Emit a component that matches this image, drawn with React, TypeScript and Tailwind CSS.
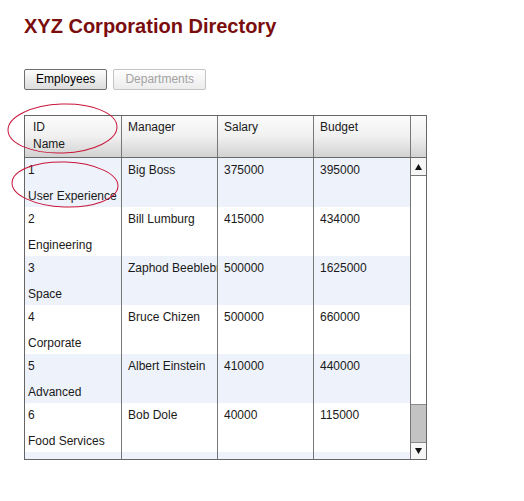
import React from 'react';

interface Employee {
  id: number;
  name: string;
  manager: string;
  salary: number;
  budget: number;
}

const employees: Employee[] = [
  { id: 1, name: 'User Experience', manager: 'Big Boss', salary: 375000, budget: 395000 },
  { id: 2, name: 'Engineering', manager: 'Bill Lumburg', salary: 415000, budget: 434000 },
  { id: 3, name: 'Space', manager: 'Zaphod Beeblebrox', salary: 500000, budget: 1625000 },
  { id: 4, name: 'Corporate', manager: 'Bruce Chizen', salary: 500000, budget: 660000 },
  { id: 5, name: 'Advanced', manager: 'Albert Einstein', salary: 410000, budget: 440000 },
  { id: 6, name: 'Food Services', manager: 'Bob Dole', salary: 40000, budget: 115000 },
];

function ArrowUp() {
  return (
    <svg width="7" height="6" viewBox="0 0 7 6">
      <path d="M3.5 0 L7 6 L0 6 Z" fill="#111" />
    </svg>
  );
}

function ArrowDown() {
  return (
    <svg width="7" height="6" viewBox="0 0 7 6">
      <path d="M0 0 L7 0 L3.5 6 Z" fill="#111" />
    </svg>
  );
}

export default function App() {
  return (
    <div
      className="relative min-h-[501px] w-[524px] bg-white pl-[24px] pt-[14px] text-[12px] text-[#1a1a1a]"
      style={{ fontFamily: '"Liberation Sans", Arial, sans-serif' }}
    >
      <h1 className="text-[20px] font-bold leading-[24px] text-[#7a0d0d]">XYZ Corporation Directory</h1>

      <div className="mt-[31px] flex gap-[6px]">
        <button className="rounded-[2px] border border-[#6f6f6f] bg-gradient-to-b from-[#fdfdfd] to-[#dcdcdc] px-[11px] py-[2px] text-[12px] leading-[15px] text-black">
          Employees
        </button>
        <button className="rounded-[2px] border border-[#c4c4c4] bg-gradient-to-b from-[#fefefe] to-[#ececec] px-[11px] py-[2px] text-[12px] leading-[15px] text-[#a3a3a3]">
          Departments
        </button>
      </div>

      <div className="mt-[25px] flex h-[345px] w-[403px] flex-col border border-[#666]">
        {/* header */}
        <div className="flex h-[42px] shrink-0 border-b border-[#6a6a6a] bg-gradient-to-b from-[#fcfcfc] via-[#f0f0f0] to-[#d2d2d2] leading-[17px]">
          <div className="w-[97px] border-r border-[#777] pl-[8px] pt-[3px]">
            <div>ID</div>
            <div>Name</div>
          </div>
          <div className="w-[96px] border-r border-[#777] pl-[6px] pt-[3px]">Manager</div>
          <div className="w-[96px] border-r border-[#777] pl-[6px] pt-[3px]">Salary</div>
          <div className="w-[97px] border-r border-[#777] pl-[6px] pt-[3px]">Budget</div>
          <div className="w-[15px]" />
        </div>

        {/* body */}
        <div className="flex min-h-0 flex-1">
          <div className="w-[386px] overflow-hidden">
            {employees.map((e, i) => (
              <div
                key={e.id}
                className={`flex h-[49px] leading-[16px] ${i % 2 === 0 ? 'bg-[#eef2fa]' : 'bg-white'}`}
              >
                <div className="w-[97px] overflow-hidden whitespace-nowrap border-r border-[#777] pl-[3px] pt-[4px]">
                  <div>{e.id}</div>
                  <div className="mt-[10px]">{e.name}</div>
                </div>
                <div className="w-[96px] overflow-hidden whitespace-nowrap border-r border-[#777] pl-[6px] pt-[4px]">
                  {e.manager}
                </div>
                <div className="w-[96px] overflow-hidden whitespace-nowrap border-r border-[#777] pl-[6px] pt-[4px]">
                  {e.salary}
                </div>
                <div className="w-[97px] overflow-hidden whitespace-nowrap border-r border-[#777] pl-[6px] pt-[4px]">
                  {e.budget}
                </div>
              </div>
            ))}
            <div className="flex h-[49px] bg-[#eef2fa]">
              <div className="w-[97px] border-r border-[#777]" />
              <div className="w-[96px] border-r border-[#777]" />
              <div className="w-[96px] border-r border-[#777]" />
              <div className="w-[97px] border-r border-[#777]" />
            </div>
          </div>

          {/* scrollbar */}
          <div className="flex w-[15px] flex-col bg-white">
            <div className="flex h-[18px] items-center justify-center border-b border-[#777] bg-[#f6f6f6]">
              <ArrowUp />
            </div>
            <div className="flex-1" />
            <div className="h-[39px] border-y border-[#8a8a8a] bg-[#c3c3c3]" />
            <div className="flex h-[16px] items-center justify-center bg-[#f6f6f6]">
              <ArrowDown />
            </div>
          </div>
        </div>
      </div>

      {/* red annotation circles */}
      <svg className="pointer-events-none absolute left-0 top-0" width="524" height="501">
        <ellipse cx="62.5" cy="128.5" rx="54.5" ry="24.5" fill="none" stroke="#c8163a" strokeWidth="1" transform="rotate(-2 62.5 128.5)" />
        <ellipse cx="65" cy="184.5" rx="53" ry="22.5" fill="none" stroke="#c8163a" strokeWidth="1" transform="rotate(2 65 184.5)" />
      </svg>
    </div>
  );
}
